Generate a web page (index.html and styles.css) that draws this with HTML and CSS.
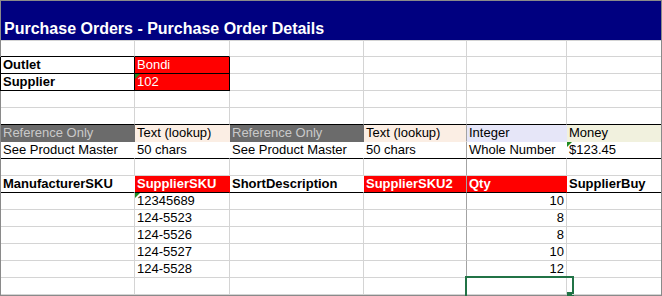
FILE: index.html
```html
<!DOCTYPE html>
<html lang="en">
<head>
<meta charset="utf-8">
<title>Purchase Orders - Purchase Order Details</title>
<link rel="stylesheet" href="styles.css">
</head>
<body>
<div class="sheet">
  <div class="title">Purchase Orders - Purchase Order Details</div>

  <div class="row">
    <div class="c bb"></div><div class="c bb"></div><div class="c"></div><div class="c"></div><div class="c"></div><div class="c"></div>
  </div>
  <div class="row">
    <div class="c bx lbl">Outlet</div><div class="c bx red">Bondi</div><div class="c"></div><div class="c"></div><div class="c"></div><div class="c"></div>
  </div>
  <div class="row">
    <div class="c bx lbl">Supplier</div><div class="c bx red tri">102</div><div class="c"></div><div class="c"></div><div class="c"></div><div class="c"></div>
  </div>
  <div class="row">
    <div class="c"></div><div class="c"></div><div class="c"></div><div class="c"></div><div class="c"></div><div class="c"></div>
  </div>
  <div class="row line-bot">
    <div class="c"></div><div class="c"></div><div class="c"></div><div class="c"></div><div class="c"></div><div class="c"></div>
  </div>
  <div class="row band band-top">
    <div class="c ref">Reference Only</div><div class="c peach">Text (lookup)</div><div class="c ref">Reference Only</div><div class="c peach dk">Text (lookup)</div><div class="c lav">Integer</div><div class="c cream">Money</div>
  </div>
  <div class="row band line-bot">
    <div class="c">See Product Master</div><div class="c">50 chars</div><div class="c">See Product Master</div><div class="c dk">50 chars</div><div class="c">Whole Number</div><div class="c tri">$123.45</div>
  </div>
  <div class="row">
    <div class="c"></div><div class="c"></div><div class="c"></div><div class="c dk"></div><div class="c"></div><div class="c"></div>
  </div>
  <div class="row head">
    <div class="c">ManufacturerSKU</div><div class="c red">SupplierSKU</div><div class="c">ShortDescription</div><div class="c red dk">SupplierSKU2</div><div class="c red">Qty</div><div class="c">SupplierBuy</div>
  </div>
  <div class="row">
    <div class="c"></div><div class="c tri">12345689</div><div class="c"></div><div class="c dk"></div><div class="c num">10</div><div class="c"></div>
  </div>
  <div class="row">
    <div class="c"></div><div class="c">124-5523</div><div class="c"></div><div class="c dk"></div><div class="c num">8</div><div class="c"></div>
  </div>
  <div class="row">
    <div class="c"></div><div class="c">124-5526</div><div class="c"></div><div class="c dk"></div><div class="c num">8</div><div class="c"></div>
  </div>
  <div class="row">
    <div class="c"></div><div class="c">124-5527</div><div class="c"></div><div class="c dk"></div><div class="c num">10</div><div class="c"></div>
  </div>
  <div class="row">
    <div class="c"></div><div class="c">124-5528</div><div class="c"></div><div class="c dk"></div><div class="c num">12</div><div class="c"></div>
  </div>
  <div class="row">
    <div class="c"></div><div class="c"></div><div class="c"></div><div class="c dk"></div><div class="c sel"></div><div class="c"></div>
  </div>
</div>
</body>
</html>
```

FILE: styles.css
```css
* {
  box-sizing: border-box;
}

html,
body {
  margin: 0;
  padding: 0;
  background: #ffffff;
}

body {
  width: 662px;
  height: 296px;
  overflow: hidden;
}

.sheet {
  width: 662px;
  height: 296px;
  border: 1px solid #8a8a8a;
  display: grid;
  grid-template-columns: 134px 95px 134px 103px 100px 94px;
  grid-template-rows: 40px 16px repeat(14, 17px);
  font-family: "Liberation Sans", Arial, sans-serif;
  font-size: 13px;
  line-height: 16px;
  color: #000000;
}

.title {
  grid-column: 1 / -1;
  background: #000080;
  color: #ffffff;
  font-weight: bold;
  font-size: 16px;
  line-height: 18px;
  padding: 19px 0 0 3px;
  border-bottom: 1px solid #d4d4d4;
  white-space: nowrap;
}

.row {
  display: contents;
}

.c {
  position: relative;
  border-right: 1px solid #d4d4d4;
  border-bottom: 1px solid #d4d4d4;
  padding: 0 2px;
  white-space: nowrap;
}

.row > .c:last-child {
  border-right-width: 0;
}

.bb {
  border-bottom-color: #000000;
}

.bx {
  border-right-color: #000000;
  border-bottom-color: #000000;
}

.lbl {
  font-weight: bold;
  box-shadow: -1px 0 0 #000000;
}

.red {
  background: #ff0000;
  color: #ffffff;
}

.line-bot > .c {
  border-bottom-color: #000000;
}

.band > .c {
  border-right-color: transparent;
}

.band-top > .c {
  border-bottom-color: transparent;
}

.head > .c {
  font-weight: bold;
  border-right-color: transparent;
  border-bottom-color: #000000;
}

.row > .c.dk {
  border-right-color: #a3a3a3;
}

.ref {
  background: #6b6b6b;
  color: #c9c9c9;
}

.peach {
  background: #fbeee4;
}

.lav {
  background: #e6e6f8;
}

.cream {
  background: #f1f1de;
}

.num {
  text-align: right;
}

.tri::before {
  content: "";
  position: absolute;
  left: 0;
  top: 0;
  width: 0;
  height: 0;
  border-top: 5px solid #1f8a1f;
  border-right: 5px solid transparent;
}

.sel::after {
  content: "";
  position: absolute;
  left: -2px;
  top: -2px;
  width: 105px;
  height: 20px;
  border: 2px solid #217346;
}

.sel::before {
  content: "";
  position: absolute;
  left: 100px;
  top: 14px;
  width: 5px;
  height: 5px;
  background: #217346;
  z-index: 1;
}
```
